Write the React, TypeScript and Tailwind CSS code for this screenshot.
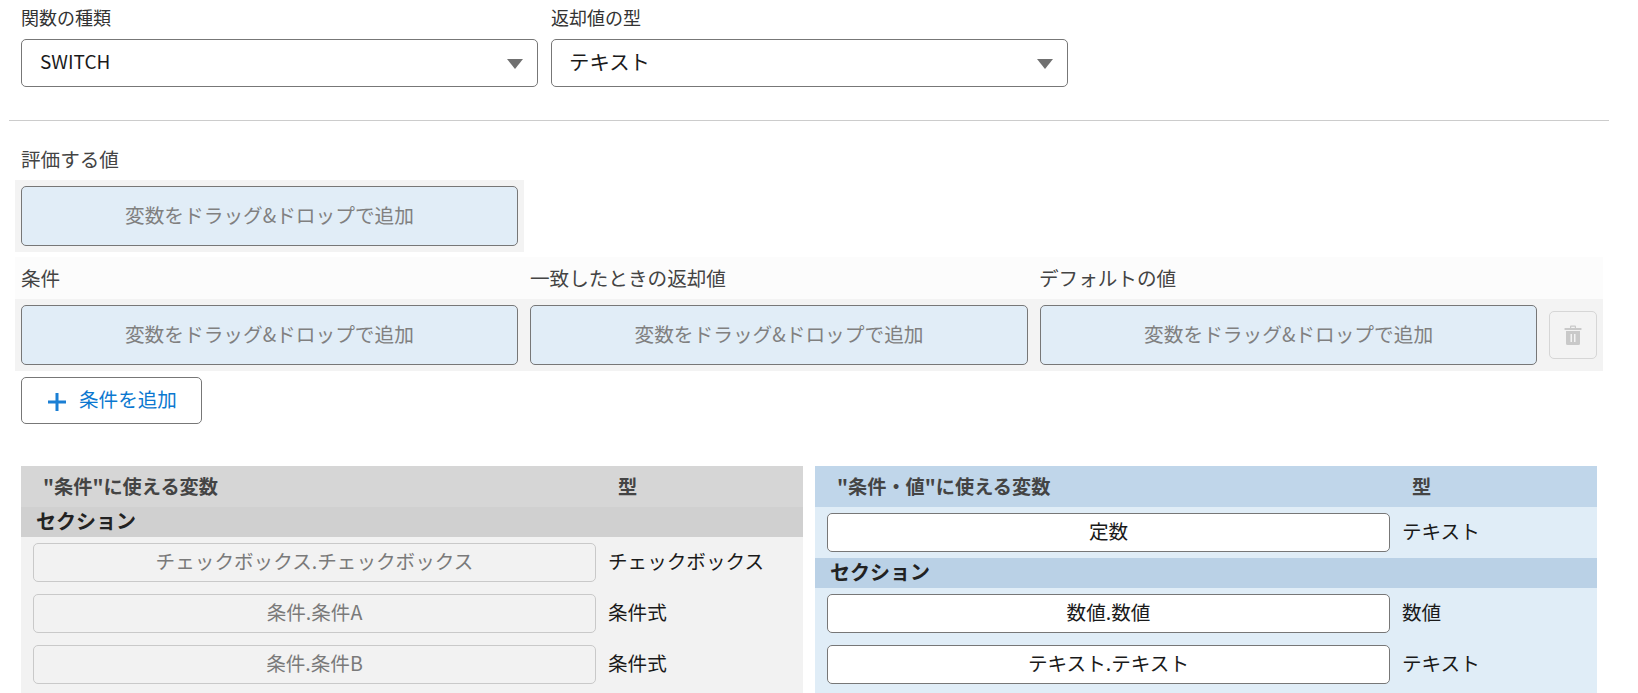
import React from "react";

const FONT = "font-['Noto_Sans_CJK_JP','Noto_Sans',sans-serif]";

function SelectBox({ value, className }: { value: string; className: string }) {
  return (
    <div className={`flex h-[48px] items-center justify-between rounded-[5px] border border-[#777777] bg-white pr-[14px] text-[#1a1a1a] ${className}`}>
      <span className="pb-[2px]">{value}</span>
      <svg width="16" height="10" viewBox="0 0 16 10" className="mt-[3px]">
        <path d="M0 0H16L8 10Z" fill="#707070" />
      </svg>
    </div>
  );
}

function DropZone({ className }: { className: string }) {
  return (
    <div className={`flex items-center justify-center rounded-[5px] border border-[#777777] bg-[#e1edf7] pb-[2px] text-[19.7px] text-[#808080] ${className}`}>
      変数をドラッグ&ドロップで追加
    </div>
  );
}

function TrashIcon() {
  return (
    <svg width="18" height="20" viewBox="0 0 18 20" fill="#c9c9c9">
      <path d="M6 3V1.5Q6 0.5 7 0.5H11Q12 0.5 12 1.5V3H10.8V1.7H7.2V3Z" />
      <rect x="0.5" y="3" width="17" height="2" rx="0.5" />
      <path fillRule="evenodd" d="M2 6H16V18.5Q16 20 14.5 20H3.5Q2 20 2 18.5ZM6.5 9V17H8V9ZM10 9V17H11.5V9Z" />
    </svg>
  );
}

function VarRow({ label, type, disabled, className }: { label: string; type: string; disabled?: boolean; className?: string }) {
  return (
    <div className={`flex h-[39px] items-center ${className ?? ""}`}>
      <div
        className={
          disabled
            ? "flex h-full w-[563px] items-center justify-center rounded-[5px] border border-[#c9c9c9] bg-[#f2f2f2] pb-[2px] text-[#7a7a7a]"
            : "flex h-full w-[563px] items-center justify-center rounded-[5px] border border-[#777777] bg-white pb-[2px] text-[#1a1a1a]"
        }
      >
        {label}
      </div>
      <span className="ml-[12px] pb-[2px] text-[#1a1a1a]">{type}</span>
    </div>
  );
}

function PanelHeader({ title, className }: { title: string; className: string }) {
  return (
    <div className={`flex h-[41px] items-center pl-[22px] text-[19.2px] font-bold text-[#444444] ${className}`}>
      <span className="w-[575px]">{title}</span>
      <span>型</span>
    </div>
  );
}

export default function App() {
  return (
    <div className={`h-[693px] overflow-hidden bg-white text-[19.6px] ${FONT}`}>
      <div className="flex gap-[13px] pl-[21px]">
        <div>
          <div className="flex h-[38.5px] items-center pb-[3px] text-[18px] text-[#333333]">関数の種類</div>
          <SelectBox value="SWITCH" className="w-[517px] pl-[18px] text-[19px]" />
        </div>
        <div>
          <div className="flex h-[38.5px] items-center pb-[3px] text-[18px] text-[#333333]">返却値の型</div>
          <SelectBox value="テキスト" className="w-[517px] pl-[17px] text-[20.4px]" />
        </div>
      </div>

      <div className="ml-[9px] mt-[33px] h-px w-[1600px] bg-[#cccccc]" />

      <div className="flex h-[59px] items-center pl-[21px] pt-[17px] text-[#444444]">評価する値</div>
      <div className="ml-[15px] h-[72px] w-[509px] bg-[#f3f3f3] p-[6px]">
        <DropZone className="h-[60px] w-[497px]" />
      </div>

      <div className="ml-[15px] mt-[5px] flex h-[42px] w-[1588px] items-center bg-[#fcfcfc] text-[#444444]">
        <span className="ml-[6px] w-[509px]">条件</span>
        <span className="w-[509px]">一致したときの返却値</span>
        <span>デフォルトの値</span>
      </div>
      <div className="ml-[15px] flex h-[72px] w-[1588px] items-center gap-[12px] bg-[#f3f3f3] px-[6px]">
        <DropZone className="h-[60px] w-[497px]" />
        <DropZone className="h-[60px] w-[498.5px]" />
        <DropZone className="h-[60px] w-[497px]" />
        <div className="flex h-[48px] w-[48px] items-center justify-center rounded-[5px] border border-[#d6d6d6]">
          <TrashIcon />
        </div>
      </div>

      <div className="ml-[21px] mt-[6px] flex h-[47px] w-[181px] items-center rounded-[5px] border border-[#777777] pl-[25px] text-[#0b78d0]">
        <svg width="20" height="20" viewBox="0 0 20 20" className="mt-[4px]">
          <path d="M10 1V19M1 10H19" stroke="#1a7fd4" strokeWidth="3" />
        </svg>
        <span className="ml-[12px] pb-[2px]">条件を追加</span>
      </div>

      <div className="ml-[21px] mt-[42px] flex gap-[12px]">
        <div className="h-[240px] w-[782px] bg-[#f2f2f2]">
          <PanelHeader title={'"条件"に使える変数'} className="bg-[#d6d6d6]" />
          <div className="flex h-[30px] items-center bg-[#d0d0d0] pb-[2px] pl-[15px] text-[20px] font-bold text-[#222222]">セクション</div>
          <div className="flex flex-col gap-[12px] pl-[12px] pt-[6px]">
            <VarRow label="チェックボックス.チェックボックス" type="チェックボックス" disabled />
            <VarRow label="条件.条件A" type="条件式" disabled />
            <VarRow label="条件.条件B" type="条件式" disabled />
          </div>
        </div>
        <div className="h-[240px] w-[782px] bg-[#e0edf7]">
          <PanelHeader title={'"条件・値"に使える変数'} className="bg-[#c0d6ea]" />
          <VarRow label="定数" type="テキスト" className="ml-[12px] mt-[6px]" />
          <div className="mt-[6px] flex h-[30px] items-center bg-[#bad1e6] pb-[2px] pl-[15px] text-[20px] font-bold text-[#222222]">セクション</div>
          <div className="flex flex-col gap-[12px] pl-[12px] pt-[6px]">
            <VarRow label="数値.数値" type="数値" />
            <VarRow label="テキスト.テキスト" type="テキスト" />
          </div>
        </div>
      </div>
    </div>
  );
}
